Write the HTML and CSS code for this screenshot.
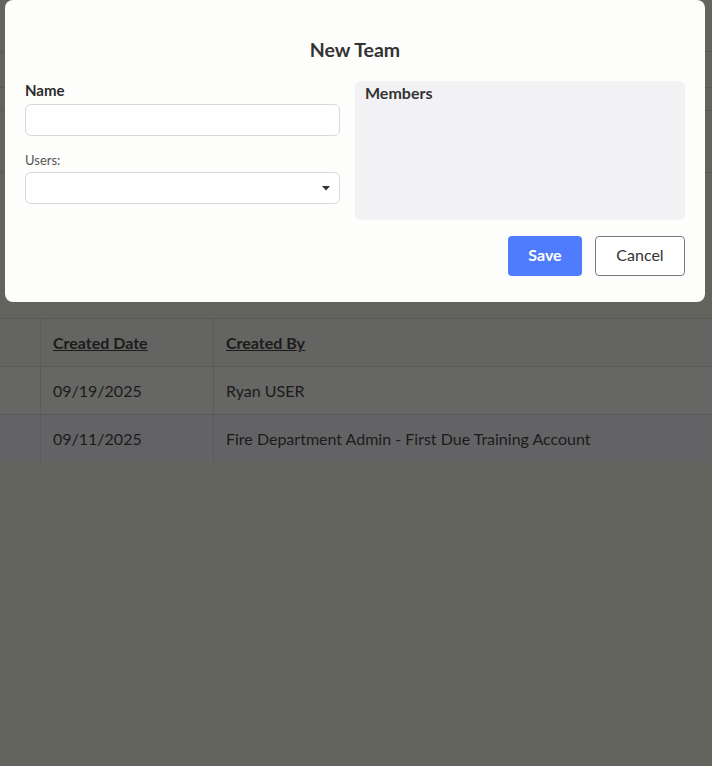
FILE: index.html
```html
<!DOCTYPE html>
<html>
<head>
<meta charset="utf-8">
<link rel="stylesheet" href="styles.css">
</head>
<body>
<div class="page">
  <div class="page-top">
    <div class="bg-line l1"></div>
    <div class="bg-line l2"></div>
    <div class="bg-line l3"></div>
    <div class="bg-line l4"></div>
  </div>
  <table class="grid">
    <thead>
      <tr>
        <th class="c1"></th>
        <th class="c2"><span class="sort">Created Date</span></th>
        <th class="c3"><span class="sort">Created By</span></th>
      </tr>
    </thead>
    <tbody>
      <tr class="r1">
        <td class="c1"></td>
        <td class="c2">09/19/2025</td>
        <td class="c3">Ryan USER</td>
      </tr>
      <tr class="r2">
        <td class="c1"></td>
        <td class="c2">09/11/2025</td>
        <td class="c3">Fire Department Admin - First Due Training Account</td>
      </tr>
    </tbody>
  </table>
</div>

<div class="modal">
  <h2 class="modal-title">New Team</h2>
  <div class="modal-body">
    <div class="form-col">
      <label class="field-label">Name</label>
      <div class="input"></div>
      <label class="small-label">Users:</label>
      <div class="input select">
        <svg class="caret" width="8" height="5" viewBox="0 0 8 5"><path d="M0 0H8L4 4.5Z" fill="#333"/></svg>
      </div>
    </div>
    <div class="members">
      <div class="members-title">Members</div>
    </div>
  </div>
  <div class="modal-footer">
    <button class="btn btn-save">Save</button>
    <button class="btn btn-cancel">Cancel</button>
  </div>
</div>
</body>
</html>
```
FILE: styles.css
```css
html, body {
  margin: 0;
  padding: 0;
}
body {
  background: #63645e;
  font-family: Lato, "Open Sans", sans-serif;
  width: 712px;
  height: 766px;
  overflow: hidden;
}
.page-top {
  height: 318px;
  position: relative;
}
.bg-line {
  height: 1px;
  background: #595a56;
  position: absolute;
  left: 0;
  right: 0;
}
.l1 { top: 51px; }
.l2 { top: 87px; }
.l3 { top: 110px; }
.l4 { top: 172px; }

.grid {
  width: 712px;
  border-collapse: collapse;
  font-size: 16px;
  color: #1b1b1b;
}
.grid th, .grid td {
  height: 47px;
  padding: 0 12px;
  text-align: left;
  border-top: 1px solid #595957;
  border-left: 1px solid #5b5b5b;
}
.grid .c1 { width: 16px; border-left: none; }
.grid .c2 { width: 148px; }
.grid th { background: #646462; font-weight: 700; }
.grid .r1 td { background: #666664; }
.grid .r2 td { background: #636365; }
.sort {
  text-decoration: underline;
}

.modal {
  position: fixed;
  top: 0;
  left: 5px;
  width: 700px;
  height: 302px;
  box-sizing: border-box;
  background: #fdfdfc;
  border-radius: 8px;
  padding: 39px 20px 0;
}
.modal-title {
  margin: 0;
  text-align: center;
  font-size: 19.5px;
  line-height: 22px;
  font-weight: 700;
  color: #333;
}
.modal-body {
  display: flex;
  gap: 15px;
  margin-top: 20px;
}
.form-col {
  width: 315px;
  display: flex;
  flex-direction: column;
}
.field-label {
  font-size: 15px;
  line-height: 19px;
  font-weight: 700;
  color: #2b2b2b;
}
.input {
  height: 32px;
  box-sizing: border-box;
  border: 1px solid #d9d9d9;
  border-radius: 6px;
  background: #fff;
  margin-top: 4px;
}
.small-label {
  font-size: 13px;
  line-height: 16px;
  color: #555;
  margin-top: 16px;
}
.select {
  margin-top: 4px;
  display: flex;
  align-items: center;
  justify-content: flex-end;
  padding-right: 9px;
}
.caret { display: block; margin-top: 1px; }
.members {
  width: 330px;
  height: 139px;
  background: #f2f2f4;
  border-radius: 6px;
  padding: 1px 10px;
  box-sizing: border-box;
}
.members-title {
  font-size: 16px;
  line-height: 21px;
  font-weight: 700;
  color: #333;
}
.modal-footer {
  display: flex;
  justify-content: flex-end;
  gap: 13px;
  margin-top: 16px;
}
.btn {
  height: 40px;
  border-radius: 4px;
  font-family: Lato, "Open Sans", sans-serif;
  font-size: 16px;
  line-height: 18px;
  padding: 0 0 2px;
  cursor: pointer;
}
.btn-save {
  width: 74px;
  background: #4e7cfd;
  border: none;
  color: #fff;
  font-weight: 700;
}
.btn-cancel {
  width: 90px;
  background: #fff;
  border: 1px solid #7a7a7a;
  color: #333;
}
```
